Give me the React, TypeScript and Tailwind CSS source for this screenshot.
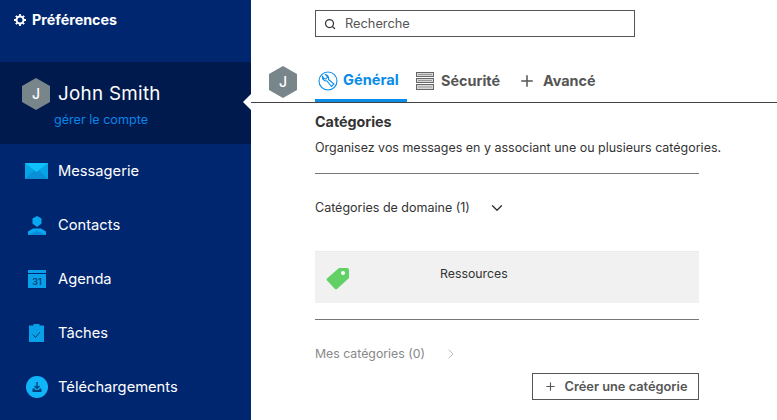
import React from "react";
import { ChevronDown, ChevronRight, Plus, Search } from "lucide-react";

const font = { fontFamily: "Inter, 'Noto Sans', sans-serif" };

const Hexagon = ({ size = "w-7 h-8", text = "text-sm" }: { size?: string; text?: string }) => (
  <div
    className={`${size} ${text} shrink-0 flex items-center justify-center bg-[#78858a] text-white font-medium [clip-path:polygon(50%_0,100%_25%,100%_75%,50%_100%,0_75%,0_25%)]`}
  >
    J
  </div>
);

const MailIcon = () => (
  <svg width="23" height="16" viewBox="0 0 23 16">
    <rect width="23" height="16" fill="#06a3e6" />
    <path d="M0 0h23L11.5 9z" fill="#10c0fa" />
    <path d="M0 16l9-8.5 2.5 2 2.5-2 9 8.5z" fill="#0a8fd6" />
  </svg>
);

const ContactIcon = () => (
  <svg width="18" height="19" viewBox="0 0 18 19">
    <path d="M9 0l4.500 2.500v5L9 11 4.500 7.500v-5z" fill="#08a8f0" />
    <path d="M0 19v-3.500L5 12.500h8l5 3V19z" fill="#08a8f0" />
    <path d="M0 19l9-4 9 4z" fill="#0a8ad8" />
  </svg>
);

const CalendarIcon = () => (
  <svg width="18" height="18" viewBox="0 0 18 18">
    <rect width="18" height="18" fill="#08a0e8" />
    <rect x="0" y="3" width="18" height="1" fill="#00266f" />
    <text x="9" y="15" textAnchor="middle" fontSize="9" fontWeight="600" fill="#00407f" fontFamily="Inter, sans-serif">
      31
    </text>
  </svg>
);

const TaskIcon = () => (
  <svg width="15" height="18" viewBox="0 0 15 18">
    <path d="M0 1.500h4.500V0h6v1.500H15V18H0z" fill="#08a0e8" />
    <path d="M4 10.500l2.500 3L11 8" fill="none" stroke="#00407f" strokeWidth="1" />
  </svg>
);

const DownloadIcon = () => (
  <svg width="22" height="22" viewBox="0 0 22 22">
    <circle cx="11" cy="11" r="11" fill="#10b4f8" />
    <path d="M11 6v6M8.500 10l2.500 2.500 2.500-2.500" fill="none" stroke="#00407f" strokeWidth="1.400" />
    <path d="M6.500 12.500h2l1 1.500h3l1-1.500h2V16h-9z" fill="#00407f" />
  </svg>
);

const GearIcon = () => (
  <svg width="12" height="12" viewBox="0 0 12 12">
    <circle cx="6" cy="6" r="3.500" fill="none" stroke="#fff" strokeWidth="2" />
    <path d="M6 0v2M6 10v2M0 6h2M10 6h2M1.800 1.800l1.400 1.400M8.800 8.800l1.400 1.400M1.800 10.200l1.400-1.400M8.800 3.200l1.400-1.400" stroke="#fff" strokeWidth="1.800" />
  </svg>
);

const WrenchIcon = () => (
  <svg width="20" height="20" viewBox="0 0 20 20" fill="none" stroke="#0a8ce8" strokeWidth="1.100">
    <circle cx="10" cy="10" r="9" />
    <path d="M4.500 5.500a4 4 0 0 0 4.500 4.500l4.500 5.500 2.500-2.500-5.500-4.500a4 4 0 0 0-3-5l2 2.500-1.500 2-2-.5z" />
  </svg>
);

const ServerIcon = () => (
  <svg width="18" height="18" viewBox="0 0 18 18">
    <rect x="0.500" y="0.500" width="17" height="4" fill="#d8d8d8" stroke="#666" />
    <rect x="0.500" y="6.500" width="17" height="4" fill="#d8d8d8" stroke="#666" />
    <rect x="0.500" y="12.500" width="17" height="5" fill="#d8d8d8" stroke="#666" />
    <path d="M2 2.500h14M2 8.500h14M2 15h14" stroke="#999" strokeWidth="1" />
  </svg>
);

const TagIcon = () => (
  <svg width="24" height="24" viewBox="0 0 24 24">
    <path d="M13 2h8a2 2 0 0 1 2 2v8L11 23a1.500 1.500 0 0 1-2 0L1 14.500a1.500 1.500 0 0 1 0-2z" fill="#61d065" />
    <circle cx="17" cy="7" r="2" fill="#fff" />
  </svg>
);

const navItems = [
  { label: "Messagerie", icon: <MailIcon /> },
  { label: "Contacts", icon: <ContactIcon /> },
  { label: "Agenda", icon: <CalendarIcon /> },
  { label: "Tâches", icon: <TaskIcon /> },
  { label: "Téléchargements", icon: <DownloadIcon /> },
];

export default function App() {
  return (
    <div className="flex w-[777px] h-[420px] overflow-hidden bg-white" style={font}>
      {/* Sidebar */}
      <aside className="w-[251px] shrink-0 bg-[#00266f] text-white">
        <div className="flex items-center gap-[6px] h-[62px] pl-[14px] pb-[22px] text-[14.300px] font-bold">
          <GearIcon />
          Préférences
        </div>
        <div className="relative h-[82px] bg-[#001a4d] pl-[22px] pt-[16px]">
          <div className="flex items-center gap-2">
            <Hexagon />
            <span className="text-[18.800px] tracking-[0.3px]">John Smith</span>
          </div>
          <div className="ml-[32px] mt-[1px] text-[12.600px] text-[#0a84e8]">gérer le compte</div>
          <div className="absolute right-0 top-[32px] w-2 h-4 bg-white [clip-path:polygon(100%_0,100%_100%,0_50%)]" />
        </div>
        <nav className="flex flex-col gap-[30px] pt-[15px]">
          {navItems.map((item) => (
            <div key={item.label} className="flex items-center h-6 text-[14.700px] font-normal">
              <div className="flex justify-center w-[23px] ml-[25px] mr-[10px]">{item.icon}</div>
              {item.label}
            </div>
          ))}
        </nav>
      </aside>

      {/* Main */}
      <main className="flex-1 min-w-0 text-[#333]">
        <div className="pl-[64px] pt-[10px]">
          <div className="flex items-center gap-[9px] w-[320px] h-[27px] border border-[#555] pl-2 text-[12.800px] text-[#555]">
            <Search size={12} strokeWidth={2.500} className="text-[#333]" />
            Recherche
          </div>
        </div>
        <div className="flex h-[66px] items-end border-b border-[#444] pl-[18px]">
          <div className="pb-[4px]">
            <Hexagon />
          </div>
          <div className="flex ml-[18px]">
            <div className="flex items-center gap-[5px] w-[92px] h-[35px] pb-[4px] border-b-[3px] border-[#0a8ce8] pl-[3px] text-[14.600px] font-bold text-[#0a8ce8]">
              <WrenchIcon />
              Général
            </div>
            <div className="flex items-center gap-[7px] h-[35px] pb-[7px] ml-[9px] text-[14.400px] font-bold text-[#555]">
              <ServerIcon />
              Sécurité
            </div>
            <div className="flex items-center gap-[7px] h-[35px] pb-[7px] ml-[18px] text-[14.400px] font-bold text-[#555]">
              <Plus size={18} strokeWidth={2} />
              Avancé
            </div>
          </div>
        </div>

        <section className="w-[384px] ml-[64px]">
          <h2 className="mt-[10px] text-[14.300px] leading-[18px] font-bold text-[#333]">Catégories</h2>
          <p className="mt-[9px] h-[33px] text-[12.480px] leading-[16px] text-[#333] whitespace-nowrap">
            Organisez vos messages en y associant une ou plusieurs catégories.
          </p>
          <hr className="border-[#777]" />
          <div className="flex items-center gap-[18px] h-[67px] pt-[1px] text-[12.500px] text-[#333]">
            Catégories de domaine (1)
            <ChevronDown size={18} strokeWidth={1.800} />
          </div>
          <div className="flex h-[52px] mt-[10px] bg-[#f1f1f1] border-t border-[#ececec]">
            <div className="w-[125px] pl-[11px] pt-[14px]">
              <TagIcon />
            </div>
            <span className="pt-[13px] text-[12.300px] leading-[18px] text-[#333]">Ressources</span>
          </div>
          <hr className="mt-[16px] border-[#777]" />
          <div className="flex items-center gap-[18px] h-[67px] pt-[1px] text-[12.300px] text-[#888]">
            Mes catégories (0)
            <ChevronRight size={16} strokeWidth={1.500} className="text-[#bbb]" />
          </div>
          <div className="flex justify-end -mt-[14px]">
            <div className="flex items-center justify-center gap-[8px] w-[167px] h-[27px] border border-[#555] text-[12.800px] font-semibold text-[#555]">
              <Plus size={13} strokeWidth={2} />
              Créer une catégorie
            </div>
          </div>
        </section>
      </main>
    </div>
  );
}
